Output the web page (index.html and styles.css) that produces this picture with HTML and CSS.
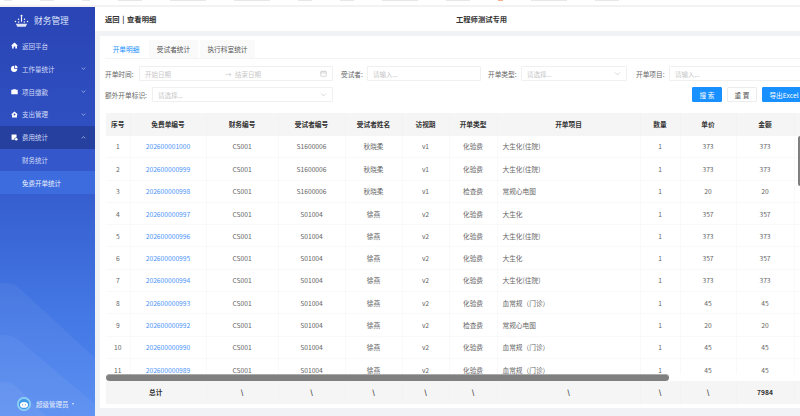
FILE: index.html
```html
<!DOCTYPE html>
<html lang="zh-CN">
<head>
    <meta charset="UTF-8">
    <title>财务管理 - 查看明细</title>
    <link rel="stylesheet" href="styles.css">
</head>
<body>
    <div class="top-strip" aria-hidden="true">
        <i class="w8"></i><i class="w14"></i><i class="w8"></i><i class="w24"></i><i class="w36"></i><i class="w36"></i><i class="w14"></i><i class="w14"></i><i class="w36"></i><i class="w24"></i><i class="w14 orange"></i><i class="w36"></i><i class="w24"></i>
    </div>
    <div class="app">
        <aside class="sidebar">
            <svg class="side-deco" viewBox="0 0 95 140" preserveAspectRatio="none" aria-hidden="true">
                <path d="M0 7 H6 Q14 7 20 13 L95 82 V140 H0 Z" fill="#fff" fill-opacity="0.05"/>
                <path d="M0 59 H5 Q13 59 20 65 L95 128 V140 H0 Z" fill="#fff" fill-opacity="0.05"/>
                <path d="M0 106 H4 Q12 106 18 112 L46 140 H0 Z" fill="#fff" fill-opacity="0.05"/>
            </svg>
            <div class="logo">
                <svg class="logo-icon" viewBox="0 0 16 14" aria-hidden="true">
                    <circle cx="8" cy="1.5" r="1.1"/><rect x="7.4" y="2.8" width="1.2" height="5"/>
                    <circle cx="4.8" cy="5" r="0.8"/><circle cx="11.2" cy="5" r="0.8"/>
                    <circle cx="1.6" cy="7.5" r="0.8"/><circle cx="14.4" cy="7.5" r="0.8"/>
                    <circle cx="5" cy="8" r="0.8"/><circle cx="11" cy="8" r="0.8"/>
                    <path d="M2 10 H14 L12.5 13 H3.5 Z" fill-opacity="0.85"/>
                </svg>
                <span>财务管理</span>
            </div>
            <nav class="menu">
                <a class="menu-item">
                    <svg class="menu-icon" viewBox="0 0 12 12"><path d="M6 1 L12 6.5 H10.2 V11 H7.4 V7.8 H4.6 V11 H1.8 V6.5 H0 Z"/></svg>
                    <span>返回平台</span>
                </a>
                <a class="menu-item">
                    <svg class="menu-icon" viewBox="0 0 12 12"><path d="M5.4 1.2 V6.6 H10.8 A5.4 5.4 0 1 1 5.4 1.2 Z"/><path d="M6.8 0.6 A4.8 4.8 0 0 1 11.4 5.2 H6.8 Z"/></svg>
                    <span>工作量统计</span>
                    <svg class="chevron" viewBox="0 0 8 5"><path d="M1 1 L4 4 L7 1"/></svg>
                </a>
                <a class="menu-item">
                    <svg class="menu-icon" viewBox="0 0 12 12"><path d="M4 3 V1.6 H8 V3 H11.5 V10.5 H0.5 V3 Z M5 3 H7 V2.6 H5 Z"/></svg>
                    <span>项目缴款</span>
                    <svg class="chevron" viewBox="0 0 8 5"><path d="M1 1 L4 4 L7 1"/></svg>
                </a>
                <a class="menu-item">
                    <svg class="menu-icon" viewBox="0 0 12 12"><path d="M6 0.8 L12 6 H10.2 V11 H1.8 V6 H0 Z M6 4.4 A1.6 1.6 0 1 0 6 7.6 A1.6 1.6 0 1 0 6 4.4 Z" fill-rule="evenodd"/></svg>
                    <span>支出管理</span>
                    <svg class="chevron" viewBox="0 0 8 5"><path d="M1 1 L4 4 L7 1"/></svg>
                </a>
                <a class="menu-item active-group">
                    <svg class="menu-icon" viewBox="0 0 12 12"><path d="M1 1 H9.5 V6 A3 3 0 0 0 6 10 H1 Z"/><circle cx="9" cy="9" r="2.2"/></svg>
                    <span>费用统计</span>
                    <svg class="chevron" viewBox="0 0 8 5"><path d="M1 4 L4 1 L7 4"/></svg>
                </a>
                <a class="menu-item sub-item">财务统计</a>
                <a class="menu-item sub-item current">免费开单统计</a>
            </nav>
            <div class="side-user">
                <svg class="avatar" viewBox="0 0 16 16" aria-hidden="true">
                    <circle cx="8" cy="8" r="8" fill="#8fd0f5"/>
                    <circle cx="8" cy="8" r="6" fill="#3f9be8"/>
                    <ellipse cx="8" cy="9" rx="4.6" ry="3.4" fill="#fff"/>
                    <circle cx="6.4" cy="8.8" r="0.6" fill="#3f7fd0"/><circle cx="9.6" cy="8.8" r="0.6" fill="#3f7fd0"/>
                </svg>
                <span>超级管理员</span>
                <i class="caret"></i>
            </div>
        </aside>

        <main class="main">
            <header class="page-header">
                <div class="crumb">返回 | 查看明细</div>
                <div class="project-name">工程师测试专用</div>
            </header>

            <section class="panel">
                <div class="tabs">
                    <div class="tab tab-active">开单明细</div>
                    <div class="tab tab-second">受试者统计</div>
                    <div class="tab tab-third">执行科室统计</div>
                </div>

                <div class="filter-row first-row">
                    <label class="filter-label lbl-time">开单时间:</label>
                    <div class="field field-range">
                        <span class="ph range-start">开始日期</span>
                        <span class="ph range-arrow">→</span>
                        <span class="ph">结束日期</span>
                        <svg class="field-icon" viewBox="0 0 10 10"><rect x="1" y="2" width="8" height="7" rx="0.8"/><path d="M1 4.2 H9 M3 1 V3 M7 1 V3"/></svg>
                    </div>
                    <label class="filter-label lbl-subject">受试者:</label>
                    <div class="field field-subject"><span class="ph">请输入...</span></div>
                    <label class="filter-label lbl-type">开单类型:</label>
                    <div class="field field-type">
                        <span class="ph">请选择...</span>
                        <svg class="field-icon" viewBox="0 0 10 10"><path d="M1.5 3.5 L5 7 L8.5 3.5"/></svg>
                    </div>
                    <label class="filter-label lbl-item">开单项目:</label>
                    <div class="field field-item"><span class="ph">请输入...</span></div>
                </div>

                <div class="filter-row second-row">
                    <label class="filter-label lbl-extra">额外开单标识:</label>
                    <div class="field field-extra">
                        <span class="ph">请选择...</span>
                        <svg class="field-icon" viewBox="0 0 10 10"><path d="M1.5 3.5 L5 7 L8.5 3.5"/></svg>
                    </div>
                    <div class="btn-group">
                        <button class="btn btn-primary btn-search">搜 索</button>
                        <button class="btn btn-reset">重 置</button>
                        <button class="btn btn-primary btn-export">导出Excel</button>
                    </div>
                </div>

                <div class="table-wrap">
                    <table class="data-table head-table">
                        <colgroup><col class="c1"><col class="c2"><col class="c3"><col class="c4"><col class="c5"><col class="c6"><col class="c7"><col class="c8"><col class="c9"><col class="c10"><col class="c11"><col class="c12"></colgroup>
                        <thead>
                            <tr><th>序号</th><th>免费单编号</th><th>财务编号</th><th>受试者编号</th><th>受试者姓名</th><th>访视期</th><th>开单类型</th><th>开单项目</th><th>数量</th><th>单价</th><th>金额</th><th></th></tr>
                        </thead>
                    </table>
                    <div class="table-body">
                        <table class="data-table">
                            <colgroup><col class="c1"><col class="c2"><col class="c3"><col class="c4"><col class="c5"><col class="c6"><col class="c7"><col class="c8"><col class="c9"><col class="c10"><col class="c11"><col class="c12"></colgroup>
                            <tbody>
                                <tr><td>1</td><td class="link">202600001000</td><td>CS001</td><td>S1600006</td><td>秋晓柔</td><td>v1</td><td>化验费</td><td class="left">大生化(住院)</td><td>1</td><td>373</td><td>373</td><td></td></tr>
                                <tr><td>2</td><td class="link">202600000999</td><td>CS001</td><td>S1600006</td><td>秋晓柔</td><td>v1</td><td>化验费</td><td class="left">大生化(住院)</td><td>1</td><td>373</td><td>373</td><td></td></tr>
                                <tr><td>3</td><td class="link">202600000998</td><td>CS001</td><td>S1600006</td><td>秋晓柔</td><td>v1</td><td>检查费</td><td class="left">常规心电图</td><td>1</td><td>20</td><td>20</td><td></td></tr>
                                <tr><td>4</td><td class="link">202600000997</td><td>CS001</td><td>S01004</td><td>徐燕</td><td>v2</td><td>化验费</td><td class="left">大生化</td><td>1</td><td>357</td><td>357</td><td></td></tr>
                                <tr><td>5</td><td class="link">202600000996</td><td>CS001</td><td>S01004</td><td>徐燕</td><td>v2</td><td>化验费</td><td class="left">大生化(住院)</td><td>1</td><td>373</td><td>373</td><td></td></tr>
                                <tr><td>6</td><td class="link">202600000995</td><td>CS001</td><td>S01004</td><td>徐燕</td><td>v2</td><td>化验费</td><td class="left">大生化</td><td>1</td><td>357</td><td>357</td><td></td></tr>
                                <tr><td>7</td><td class="link">202600000994</td><td>CS001</td><td>S01004</td><td>徐燕</td><td>v2</td><td>化验费</td><td class="left">大生化(住院)</td><td>1</td><td>373</td><td>373</td><td></td></tr>
                                <tr><td>8</td><td class="link">202600000993</td><td>CS001</td><td>S01004</td><td>徐燕</td><td>v2</td><td>化验费</td><td class="left">血常规（门诊）</td><td>1</td><td>45</td><td>45</td><td></td></tr>
                                <tr><td>9</td><td class="link">202600000992</td><td>CS001</td><td>S01004</td><td>徐燕</td><td>v2</td><td>检查费</td><td class="left">常规心电图</td><td>1</td><td>20</td><td>20</td><td></td></tr>
                                <tr><td>10</td><td class="link">202600000990</td><td>CS001</td><td>S01004</td><td>徐燕</td><td>v2</td><td>化验费</td><td class="left">血常规（门诊）</td><td>1</td><td>45</td><td>45</td><td></td></tr>
                                <tr><td>11</td><td class="link">202600000989</td><td>CS001</td><td>S01004</td><td>徐燕</td><td>v2</td><td>化验费</td><td class="left">血常规（门诊）</td><td>1</td><td>45</td><td>45</td><td></td></tr>
                            </tbody>
                        </table>
                        <div class="v-thumb"></div>
                    </div>
                    <div class="h-scroll"><div class="h-thumb"></div></div>
                    <table class="data-table foot-table">
                        <colgroup><col class="c1"><col class="c2"><col class="c3"><col class="c4"><col class="c5"><col class="c6"><col class="c7"><col class="c8"><col class="c9"><col class="c10"><col class="c11"><col class="c12"></colgroup>
                        <tfoot>
                            <tr><td colspan="2">总计</td><td>\</td><td>\</td><td>\</td><td>\</td><td>\</td><td>\</td><td>\</td><td>\</td><td>7984</td><td></td></tr>
                        </tfoot>
                    </table>
                </div>
            </section>
        </main>
    </div>
</body>
</html>
```

FILE: styles.css
```css
* {
    box-sizing: border-box;
}

html, body {
    margin: 0;
    padding: 0;
    width: 800px;
    height: 416px;
    overflow: hidden;
    background-color: #fff;
    font-family: "Noto Sans CJK SC", "Noto Sans", sans-serif;
    color: #333;
}

/* strip of the page above, only the bottom of its text shows */
.top-strip {
    height: 7px;
    display: flex;
    gap: 28px;
    padding-left: 4px;
    border-bottom: 2px solid #f2f2f2;
}
.top-strip i {
    height: 1px;
    background-color: #e8e8e8;
}
.top-strip .w8 { width: 8px; }
.top-strip .w14 { width: 14px; }
.top-strip .w24 { width: 24px; }
.top-strip .w36 { width: 36px; }
.top-strip .orange { background-color: #f5b08c; width: 5px; height: 1px; }

.app {
    display: flex;
    height: 409px;
}

/* sidebar */
.sidebar {
    position: relative;
    width: 95px;
    flex-shrink: 0;
    display: flex;
    flex-direction: column;
    color: #fff;
    background: linear-gradient(180deg, #2a44b4 0%, #2f50c2 30%, #3a66d6 55%, #4478e4 75%, #5088f2 100%);
}

.side-deco {
    position: absolute;
    left: 0;
    bottom: 0;
    width: 95px;
    height: 140px;
}

.logo {
    height: 27.6px;
    display: flex;
    align-items: center;
    gap: 5px;
    padding-left: 14px;
    font-size: 8.7px;
    color: #dfe6fb;
}
.logo-icon {
    width: 15px;
    height: 14px;
    flex-shrink: 0;
    fill: #fff;
}

.menu {
    position: relative;
}
.menu-item {
    height: 22.8px;
    display: flex;
    align-items: center;
    padding-left: 11px;
    font-size: 6.5px;
    color: #d3dcf7;
}
.menu-icon {
    width: 7px;
    height: 7px;
    flex-shrink: 0;
    margin-right: 4px;
    fill: #fff;
}
.chevron {
    width: 5px;
    height: 3px;
    margin-left: auto;
    margin-right: 9px;
    fill: none;
    stroke: #d3dcf7;
    stroke-width: 1;
}
.active-group {
    background-color: #25409f;
}
.sub-item {
    padding-left: 22px;
    background-color: #3458cc;
}
.sub-item.current {
    background-color: #3c6cde;
    color: #eef2fd;
}

.side-user {
    position: relative;
    margin-top: auto;
    height: 24px;
    display: flex;
    align-items: center;
    padding-left: 17px;
    font-size: 6.5px;
    color: #e6edfd;
}
.avatar {
    width: 14px;
    height: 14px;
    flex-shrink: 0;
    margin-right: 5px;
}
.caret {
    margin-left: 3px;
    border-left: 1.5px solid transparent;
    border-right: 1.5px solid transparent;
    border-top: 2px solid #e6edfd;
}

/* main area */
.main {
    flex: 1;
    min-width: 0;
    background-color: #f0f2f5;
    display: flex;
    flex-direction: column;
}

.page-header {
    height: 24px;
    flex-shrink: 0;
    background-color: #fff;
    display: flex;
    align-items: center;
    padding-left: 10px;
    font-size: 7.3px;
    font-weight: bold;
    color: #333;
}
.crumb {
    width: 351px;
    word-spacing: 1px;
}

.panel {
    margin: 5px 0 0 5px;
    height: 371.5px;
    background-color: #fff;
    padding: 4px 0 0 5px;
    overflow: hidden;
}

.tabs {
    height: 19px;
    display: flex;
    gap: 2px;
    border-bottom: 1px solid #f4f4f4;
    width: 700px;
}
.tab {
    display: flex;
    align-items: center;
    justify-content: center;
    font-size: 6.7px;
    color: #555;
    background-color: #fafafa;
}
.tab-active {
    width: 42px;
    color: #1890ff;
    background-color: #fff;
}
.tab-second { width: 49px; }
.tab-third { width: 55px; }

.filter-row {
    display: flex;
    align-items: center;
    height: 15px;
    width: 760px;
    font-size: 6.7px;
}
.first-row { margin-top: 7px; }
.second-row { margin-top: 6px; }

.filter-label {
    flex-shrink: 0;
    color: #666;
}
.lbl-time { width: 34px; }
.lbl-subject { width: 26px; margin-left: 8px; }
.lbl-type { width: 33px; margin-left: 7px; }
.lbl-item { width: 33px; margin-left: 9px; }
.lbl-extra { width: 47px; }

.field {
    flex-shrink: 0;
    height: 15px;
    display: flex;
    align-items: center;
    padding: 0 5px;
    border: 1px solid #f0f0f0;
    border-radius: 1px;
    background-color: #fff;
}
.field-range { width: 194px; }
.field-subject { width: 114px; }
.field-type { width: 106px; }
.field-item { width: 140px; }
.field-extra { width: 181px; }

.ph {
    color: #c8c8c8;
    font-size: 6.5px;
}
.range-start { width: 80px; }
.range-arrow { width: 10px; }
.field-icon {
    width: 7px;
    height: 7px;
    margin-left: auto;
    fill: none;
    stroke: #bbb;
    stroke-width: 0.8;
}

.btn-group {
    display: flex;
    gap: 5px;
    margin-left: 359px;
    flex-shrink: 0;
}
.btn {
    height: 15px;
    padding: 0;
    border: 1px solid #ececec;
    border-radius: 1px;
    font-family: inherit;
    font-size: 6.7px;
    background-color: #fff;
    color: #555;
}
.btn-primary {
    background-color: #1890ff;
    border-color: #1890ff;
    color: #fff;
}
.btn-search { width: 30px; }
.btn-reset { width: 30px; }
.btn-export { width: 44px; }

/* table */
.table-wrap {
    margin: 11px 0 0 1px;
    width: 694px;
}

.data-table {
    width: 708px;
    table-layout: fixed;
    border-collapse: collapse;
    font-size: 6.7px;
}
.c1 { width: 24px; }
.c2 { width: 76px; }
.c3 { width: 72px; }
.c4 { width: 67px; }
.c5 { width: 57px; }
.c6 { width: 47px; }
.c7 { width: 48px; }
.c8 { width: 143px; }
.c9 { width: 40px; }
.c10 { width: 56px; }
.c11 { width: 58px; }
.c12 { width: 20px; }

.data-table th,
.data-table td {
    padding: 0;
    text-align: center;
    white-space: nowrap;
    overflow: hidden;
    border-right: 1px solid #f9f9f9;
}
.data-table th {
    height: 22.5px;
    background-color: #f5f5f5;
    border-right-color: #f2f2f2;
    font-weight: bold;
    color: #333;
}
.data-table tbody td {
    height: 22.3px;
    border-bottom: 1px solid #f9f9f9;
    color: #666;
}
.data-table td.left {
    text-align: left;
    padding-left: 5px;
}
.data-table td.link {
    color: #4d94f8;
}
.data-table tfoot td {
    height: 22.5px;
    background-color: #f5f5f5;
    border-right-color: #f2f2f2;
    font-weight: bold;
    color: #333;
}

.table-body {
    position: relative;
    height: 238.5px;
    overflow: hidden;
}
.v-thumb {
    position: absolute;
    left: 692px;
    top: 0;
    width: 4px;
    height: 50px;
    background-color: #808080;
    border-radius: 2px;
}

.h-scroll {
    height: 7px;
}
.h-thumb {
    width: 563px;
    height: 7px;
    background-color: #808080;
    border-top: 1px solid #aaa;
    border-radius: 3.5px;
}
```
